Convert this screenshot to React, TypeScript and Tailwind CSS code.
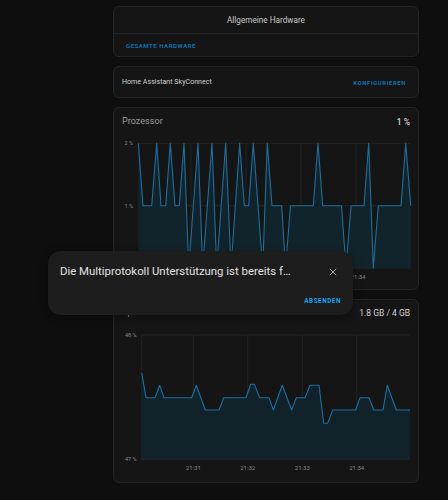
const cpu: [number, number][] = [
  [138.3, 143.3], [143, 205.7], [151.7, 205.7], [156.7, 143.3], [161, 205.7], [165.7, 205.7],
  [170.3, 143.3], [175, 205.7], [179.3, 205.7], [184, 143.3], [188.7, 268], [198, 143.3],
  [202.7, 268], [212, 143.3], [216.7, 268], [225.7, 143.3], [231, 268], [239.7, 143.3],
  [244.3, 205.7], [248.7, 205.7], [253.3, 143.3], [262.7, 268], [267.3, 143.3], [272, 205.7],
  [281.7, 205.7], [285.5, 268], [290.5, 205.7], [313.3, 205.7], [318, 143.3], [322.7, 205.7],
  [341.5, 205.7], [346, 268], [351, 205.7], [364, 205.7], [368.7, 143.3], [373.3, 268],
  [378.3, 205.7], [401, 205.7], [405.7, 143.3], [410.7, 205.7],
];

const mem: [number, number][] = [
  [141.7, 372.7], [146, 397.7], [155, 397.7], [159.7, 385.3], [164, 397.7], [191.7, 397.7],
  [196.3, 385.3], [205.3, 410], [219, 410], [223.7, 397.7], [246, 397.7], [250.7, 384.3],
  [254.3, 384.3], [259.7, 397.7], [269, 397.7], [273.3, 410], [282.3, 385.3], [291.7, 410],
  [296.3, 397.7], [305, 397.7], [310, 385.3], [319, 385.3], [323.7, 423.3], [327.7, 423.3],
  [332.7, 410], [355.7, 410], [360, 397.7], [369, 397.7], [373.7, 410], [383, 410],
  [387.3, 385.3], [396.3, 410], [410, 410],
];

const line = (pts: [number, number][]) => pts.map(([x, y], i) => `${i ? "L" : "M"}${x} ${y}`).join(" ");
const area = (pts: [number, number][], base: number) =>
  `${line(pts)} L${pts[pts.length - 1][0]} ${base} L${pts[0][0]} ${base} Z`;

const times = ["21:31", "21:32", "21:33", "21:34"];

function Card({ children }: { children: React.ReactNode }) {
  return <div className="w-[306px] rounded-[6px] border border-[#242424] bg-[#151515]">{children}</div>;
}

function CpuChart() {
  const grid = [191, 246, 301, 356];
  return (
    <svg width="304" height="153" viewBox="114 136 304 153" className="block">
      <line x1="138.3" x2="410.7" y1="143.3" y2="143.3" stroke="#262626" strokeWidth="1" />
      <line x1="138.3" x2="410.7" y1="205.7" y2="205.7" stroke="#262626" strokeWidth="1" />
      <line x1="138.3" x2="410.7" y1="268" y2="268" stroke="#262626" strokeWidth="1" />
      {grid.map((x) => (
        <line key={x} x1={x} x2={x} y1="143.3" y2="268" stroke="#232323" strokeWidth="1" />
      ))}
      <path d={area(cpu, 268)} fill="#12242b" />
      <path d={line(cpu)} fill="none" stroke="#1b70a0" strokeWidth="1.1" strokeLinejoin="round" />
      <text x="133" y="145.3" fontSize="5.5" fill="#8a8a8a" textAnchor="end">2 %</text>
      <text x="133" y="207.7" fontSize="5.5" fill="#8a8a8a" textAnchor="end">1 %</text>
      {/* the other time labels sit under the dialog */}
      <text x="358" y="279" fontSize="6" fill="#8a8a8a" textAnchor="middle">{times[3]}</text>
    </svg>
  );
}

function MemChart() {
  const grid = [193.3, 247.7, 302.3, 356.7];
  return (
    <svg width="304" height="156" viewBox="114 326 304 156" className="block">
      <line x1="141.7" x2="410" y1="335" y2="335" stroke="#262626" strokeWidth="1" />
      <line x1="141.7" x2="410" y1="459.3" y2="459.3" stroke="#262626" strokeWidth="1" />
      <line x1="141.7" x2="141.7" y1="335" y2="459.3" stroke="#232323" strokeWidth="1" />
      {grid.map((x) => (
        <line key={x} x1={x} x2={x} y1="335" y2="459.3" stroke="#232323" strokeWidth="1" />
      ))}
      <path d={area(mem, 459.3)} fill="#12222a" />
      <path d={line(mem)} fill="none" stroke="#1b70a0" strokeWidth="1.1" strokeLinejoin="round" />
      <text x="136.5" y="337" fontSize="5.5" fill="#8a8a8a" textAnchor="end">48 %</text>
      <text x="136.5" y="461.3" fontSize="5.5" fill="#8a8a8a" textAnchor="end">47 %</text>
      {grid.map((x, i) => (
        <text key={x} x={x} y="470" fontSize="6" fill="#8a8a8a" textAnchor="middle">{times[i]}</text>
      ))}
    </svg>
  );
}

export default function App() {
  return (
    <div className="relative h-[500px] w-[448px] overflow-hidden bg-[#0e0e0e] [font-family:Roboto,'Liberation_Sans',sans-serif]">
      <div className="flex flex-col gap-[9px] pl-[113px] pt-[6px]">
        <Card>
          <div className="flex h-[26px] items-center justify-center text-[8.2px] text-[#c8c8c8]">
            Allgemeine Hardware
          </div>
          <div className="h-px bg-[#222222]" />
          <div className="flex h-[22px] items-center pl-[12px] text-[6px] font-bold tracking-[0.09em] text-[#0d72ad]">
            GESAMTE HARDWARE
          </div>
        </Card>

        <Card>
          <div className="flex h-[30px] items-center justify-between pl-[8px] pr-[12px]">
            <span className="text-[7.1px] text-[#cfcfcf]">Home Assistant SkyConnect</span>
            <span className="text-[6px] font-bold tracking-[0.09em] text-[#0d72ad]">KONFIGURIEREN</span>
          </div>
        </Card>

        <Card>
          <div className="flex h-[28px] items-center justify-between px-[8px]">
            <span className="text-[9.1px] text-[#9c9c9c]">Prozessor</span>
            <span className="text-[8.5px] font-medium text-[#d6d6d6]">1 %</span>
          </div>
          <CpuChart />
        </Card>

        <Card>
          <div className="flex h-[26px] items-center justify-between px-[8px]">
            <span className="text-[9.1px] text-[#9c9c9c]">Speicher</span>
            <span className="text-[8.5px] text-[#d6d6d6]">1.8 GB / 4 GB</span>
          </div>
          <MemChart />
        </Card>
      </div>

      <div className="absolute left-[48px] top-[251px] flex h-[64px] w-[305px] flex-col justify-between rounded-[13px] bg-[#1d1d1d] pb-[9px] pl-[12px] pr-[12px] pt-[12px] shadow-[0_2px_8px_rgba(0,0,0,0.35)]">
        <div className="flex items-center justify-between">
          <span className="whitespace-nowrap text-[11.4px] text-[#e3e3e3]">Die Multiprotokoll Unterstützung ist bereits f…</span>
          <svg width="8" height="8" viewBox="0 0 8 8" className="mr-[4px] shrink-0">
            <path d="M0.8 0.8 L7.2 7.2 M7.2 0.8 L0.8 7.2" stroke="#a8a8a8" strokeWidth="1" />
          </svg>
        </div>
        <div className="flex justify-end">
          <span className="text-[6.3px] font-bold tracking-[0.09em] text-[#16a3ee]">ABSENDEN</span>
        </div>
      </div>
    </div>
  );
}
